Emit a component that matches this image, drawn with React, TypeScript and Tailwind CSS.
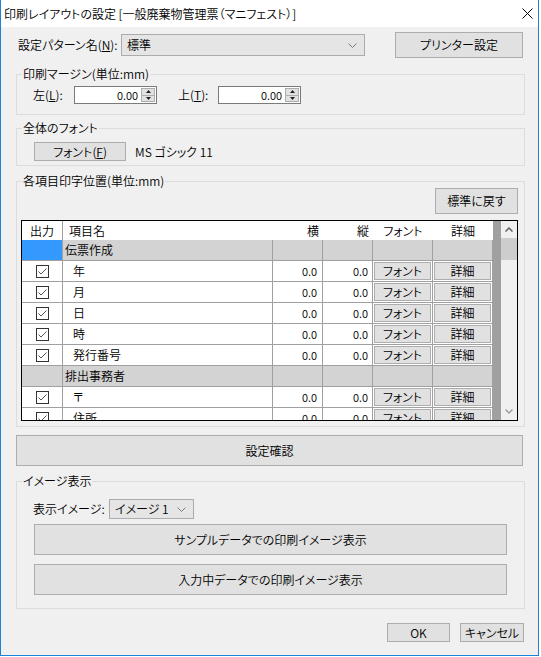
import React from "react";

const FONT = "font-['Noto_Sans_CJK_JP','Noto_Sans_CJK_SC',sans-serif] [font-feature-settings:'palt'] [font-weight:350]";

function Chevron({ color = "#7a7a7a" }: { color?: string }) {
  return (
    <svg width="9" height="5" viewBox="0 0 9 5" className="shrink-0">
      <path d="M0.5 0.5L4.5 4.5L8.5 0.5" fill="none" stroke={color} strokeWidth="1" />
    </svg>
  );
}

function Button({ className = "", children }: { className?: string; children: React.ReactNode }) {
  return (
    <div className={`flex items-center justify-center border border-[#adadad] bg-[#e1e1e1] ${className}`}>
      {children}
    </div>
  );
}

function Select({ className = "", value }: { className?: string; value: string }) {
  return (
    <div className={`flex items-center justify-between border border-[#acacac] bg-[#e5e5e5] pl-[5px] pr-[7px] ${className}`}>
      <span>{value}</span>
      <Chevron />
    </div>
  );
}

function Spin({ value }: { value: string }) {
  return (
    <div className="flex h-[18px] w-[83px] items-stretch border border-[#7a7a7a] bg-white">
      <div className="flex flex-1 items-center justify-end pr-[3px] text-[11px] leading-none">{value}</div>
      <div className="flex w-[15px] flex-col py-px pr-px">
        <div className="flex flex-1 items-center justify-center border border-[#adadad] bg-[#e1e1e1]">
          <svg width="5" height="3" viewBox="0 0 5 3">
            <path d="M0 3L2.5 0L5 3Z" fill="#222" />
          </svg>
        </div>
        <div className="flex flex-1 items-center justify-center border border-t-0 border-[#adadad] bg-[#e1e1e1]">
          <svg width="5" height="3" viewBox="0 0 5 3">
            <path d="M0 0L2.5 3L5 0Z" fill="#222" />
          </svg>
        </div>
      </div>
    </div>
  );
}

function Group({ title, className = "", children }: { title: string; className?: string; children: React.ReactNode }) {
  return (
    <fieldset className={`border border-[#dcdcdc] ${className}`}>
      <legend className="ml-[5px] h-[16px] px-px leading-[16px]">{title}</legend>
      {children}
    </fieldset>
  );
}

function Check() {
  return (
    <svg width="13" height="13" viewBox="0 0 13 13">
      <rect x="0.5" y="0.5" width="12" height="12" fill="#fff" stroke="#333" />
      <path d="M2.5 6.5L5 9L10.5 3.5" fill="none" stroke="#555" strokeWidth="1" />
    </svg>
  );
}

type Row = { kind: "section"; name: string; selected?: boolean } | { kind: "item"; name: string };

const rows: Row[] = [
  { kind: "section", name: "伝票作成", selected: true },
  { kind: "item", name: "年" },
  { kind: "item", name: "月" },
  { kind: "item", name: "日" },
  { kind: "item", name: "時" },
  { kind: "item", name: "発行番号" },
  { kind: "section", name: "排出事務者" },
  { kind: "item", name: "〒" },
  { kind: "item", name: "住所" },
];

function GridRow({ row }: { row: Row }) {
  if (row.kind === "section") {
    return (
      <div className="flex h-[21px] shrink-0 border-b border-[#a0a0a0] bg-[#d3d3d3]">
        <div className={`w-[41px] border-r border-[#a0a0a0] ${row.selected ? "bg-[#3399ff]" : ""}`} />
        <div className="flex w-[210px] items-center border-r border-[#a0a0a0] pl-[2px]">{row.name}</div>
        <div className="w-[50px] border-r border-[#a0a0a0]" />
        <div className="w-[50px] border-r border-[#a0a0a0]" />
        <div className="w-[60px] border-r border-[#a0a0a0]" />
        <div className="w-[60px] border-r border-[#a0a0a0]" />
      </div>
    );
  }
  return (
    <div className="flex h-[21px] shrink-0 border-b border-[#a0a0a0] bg-white">
      <div className="flex w-[41px] items-center justify-center border-r border-[#a0a0a0]">
        <Check />
      </div>
      <div className="flex w-[210px] items-center border-r border-[#a0a0a0] pl-[10px]">{row.name}</div>
      <div className="flex w-[50px] items-center justify-end border-r border-[#a0a0a0] pr-[5px] text-[11px]">0.0</div>
      <div className="flex w-[50px] items-center justify-end border-r border-[#a0a0a0] pr-[4px] text-[11px]">0.0</div>
      <div className="flex w-[60px] border-r border-[#a0a0a0] p-px">
        <Button className="flex-1">フォント</Button>
      </div>
      <div className="flex w-[60px] border-r border-[#a0a0a0] p-px">
        <Button className="flex-1">詳細</Button>
      </div>
    </div>
  );
}

function Grid() {
  return (
    <div className="flex h-[201px] w-[497px] border border-black">
      <div className="flex w-[471px] flex-col overflow-hidden">
        <div className="flex h-[19px] shrink-0 bg-white">
          <div className="flex w-[41px] items-center justify-center border-r border-[#a0a0a0]">出力</div>
          <div className="flex w-[210px] items-center pl-[6px]">項目名</div>
          <div className="flex w-[50px] items-center justify-end pr-[4px]">横</div>
          <div className="flex w-[50px] items-center justify-end pr-[4px]">縦</div>
          <div className="flex w-[60px] items-center justify-center">フォント</div>
          <div className="flex w-[60px] items-center justify-center">詳細</div>
        </div>
        {rows.map((r, i) => (
          <GridRow key={i} row={r} />
        ))}
      </div>
      <div className="w-[8px] bg-[#a0a0a0]" />
      <div className="flex w-[16px] flex-col bg-[#f0f0f0]">
        <div className="flex h-[17px] items-center justify-center">
          <svg width="8" height="5" viewBox="0 0 8 5">
            <path d="M0.5 4.5L4 1L7.5 4.5" fill="none" stroke="#606060" strokeWidth="1.5" />
          </svg>
        </div>
        <div className="h-[22px] bg-[#cdcdcd]" />
        <div className="flex-1" />
        <div className="flex h-[17px] items-center justify-center">
          <svg width="8" height="5" viewBox="0 0 8 5">
            <path d="M0.5 0.5L4 4L7.5 0.5" fill="none" stroke="#a0a0a0" strokeWidth="1.5" />
          </svg>
        </div>
      </div>
    </div>
  );
}

export default function App() {
  return (
    <div className={`h-[657px] w-[541px] bg-white text-[12px] leading-[16px] text-black ${FONT}`}>
      <div className="flex h-[656px] w-[539px] flex-col border-x border-b border-[#1883d7]">
        {/* title bar */}
        <div className="flex h-[27px] shrink-0 items-center justify-between bg-white pl-[3px] pr-[4px]">
          <span className="text-[12px]">印刷レイアウトの設定 [一般廃棄物管理票（マニフェスト）]</span>
          <svg width="11" height="11" viewBox="0 0 11 11" className="mr-[1px]">
            <path d="M0.5 0.5L10.5 10.5M10.5 0.5L0.5 10.5" stroke="#000" strokeWidth="1" />
          </svg>
        </div>

        {/* dialog body */}
        <div className="flex flex-1 flex-col bg-[#f0f0f0] pl-[15px] pr-[13px] pt-[5px]">
          <div className="flex h-[26px] items-center">
            <span className="ml-[2px] w-[103px]">
              設定パターン名(<u>N</u>):
            </span>
            <Select className="h-[22px] w-[244px]" value="標準" />
            <div className="flex-1" />
            <Button className="mr-[2px] h-[26px] w-[128px]">プリンター設定</Button>
          </div>

          <Group title="印刷マージン(単位:mm)" className="mt-[8px]">
            <div className="flex items-center pb-[10px] pl-[16px] pt-[4px]">
              <span className="w-[41px]">
                左(<u>L</u>):
              </span>
              <Spin value="0.00" />
              <span className="ml-[21px] w-[40px]">
                上(<u>T</u>):
              </span>
              <Spin value="0.00" />
            </div>
          </Group>

          <Group title="全体のフォント" className="mt-[5px]">
            <div className="flex items-center pb-[4px] pl-[17px] pt-[6px]">
              <Button className="h-[19px] w-[92px]">
                <span>
                  フォント(<u>F</u>)
                </span>
              </Button>
              <span className="ml-[9px]">MS ゴシック 11</span>
            </div>
          </Group>

          <Group title="各項目印字位置(単位:mm)" className="mt-[7px]">
            <div className="flex flex-col pb-[5px] pl-[4px] pr-[6px]">
              <div className="flex justify-end">
                <Button className="-mt-px h-[26px] w-[83px]">標準に戻す</Button>
              </div>
              <div className="mt-[6px]">
                <Grid />
              </div>
            </div>
          </Group>

          <Button className="mt-[8px] h-[31px] w-[507px]">設定確認</Button>

          <Group title="イメージ表示" className="mt-[7px]">
            <div className="flex flex-col pb-[13px] pt-[10px]">
              <div className="flex items-center pl-[16px]">
                <span className="w-[76px]">表示イメージ:</span>
                <Select className="h-[20px] w-[85px]" value="イメージ 1" />
              </div>
              <div className="flex flex-col gap-[9px] px-[17px] pt-[5px]">
                <Button className="h-[31px]">サンプルデータでの印刷イメージ表示</Button>
                <Button className="h-[31px]">入力中データでの印刷イメージ表示</Button>
              </div>
            </div>
          </Group>

          <div className="mr-px mt-[14px] flex justify-end gap-[10px]">
            <Button className="h-[19px] w-[63px]">OK</Button>
            <Button className="h-[19px] w-[64px]">キャンセル</Button>
          </div>
        </div>
      </div>
    </div>
  );
}
